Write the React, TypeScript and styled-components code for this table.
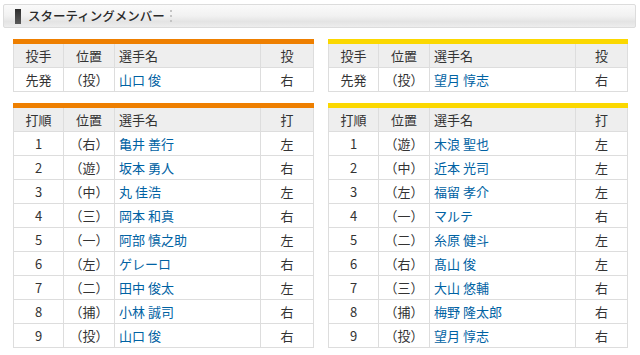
import { createGlobalStyle, styled } from "styled-components"

const GlobalStyle = createGlobalStyle`
  html, body {
    margin: 0;
    padding: 0;
    background: #ffffff;
  }
  body {
    font-family: "Noto Sans CJK JP", "Noto Sans", sans-serif;
    color: #333333;
  }
`

const Page = styled.div`
  width: 640px;
  padding: 4px 0 0 3px;
  box-sizing: border-box;
`

const TitleBar = styled.div`
  width: 633px;
  height: 24px;
  box-sizing: border-box;
  border: 1px solid #dcdcdc;
  border-radius: 2px;
  background: linear-gradient(#fafafa 0%, #f1f1f1 50%, #e4e4e4 75%, #ededed 100%);
  display: flex;
  align-items: center;
  padding-left: 11px;
`

const TitleMark = styled.span`
  width: 6px;
  height: 15px;
  background: linear-gradient(#2e2e2e, #5a5a5a);
  margin-right: 7px;
`

const TitleText = styled.h2`
  margin: 0;
  font-size: 12.5px;
  font-weight: 500;
  color: #2a2a2a;
  line-height: 1;
`

const Dots = styled.span`
  display: flex;
  flex-direction: column;
  gap: 3px;
  margin-left: 5px;

  i {
    width: 2px;
    height: 2px;
    background: #c4c4c4;
  }
`

const Columns = styled.div`
  display: flex;
  gap: 14px;
  padding: 11px 0 0 10px;
`

const Side = styled.div`
  display: flex;
  flex-direction: column;
  gap: 11px;
`

const Table = styled.table<{ $accent: string; $w: number }>`
  border-collapse: collapse;
  table-layout: fixed;
  width: ${(p) => p.$w}px;
  border-top: 5px solid ${(p) => p.$accent};
  font-size: 13px;
  line-height: 1;

  th, td {
    border: 1px solid #dddddd;
    height: 23px;
    padding: 0;
    text-align: center;
    font-weight: normal;
    color: #333333;
    white-space: nowrap;
  }

  tr:first-child th {
    border-top: 0;
  }

  th {
    background: #eeeeee;
  }

  .name {
    text-align: left;
    padding-left: 4px;
  }

  td.name {
    color: #0062a3;
  }
`

type Player = [string, string, string, string]

const awayPitcher: Player = ["先発", "（投）", "山口 俊", "右"]
const homePitcher: Player = ["先発", "（投）", "望月 惇志", "右"]

const awayOrder: Player[] = [
  ["1", "（右）", "亀井 善行", "左"],
  ["2", "（遊）", "坂本 勇人", "右"],
  ["3", "（中）", "丸 佳浩", "左"],
  ["4", "（三）", "岡本 和真", "右"],
  ["5", "（一）", "阿部 慎之助", "左"],
  ["6", "（左）", "ゲレーロ", "右"],
  ["7", "（二）", "田中 俊太", "左"],
  ["8", "（捕）", "小林 誠司", "右"],
  ["9", "（投）", "山口 俊", "右"],
]

const homeOrder: Player[] = [
  ["1", "（遊）", "木浪 聖也", "左"],
  ["2", "（中）", "近本 光司", "左"],
  ["3", "（左）", "福留 孝介", "左"],
  ["4", "（一）", "マルテ", "右"],
  ["5", "（二）", "糸原 健斗", "左"],
  ["6", "（右）", "髙山 俊", "左"],
  ["7", "（三）", "大山 悠輔", "右"],
  ["8", "（捕）", "梅野 隆太郎", "右"],
  ["9", "（投）", "望月 惇志", "右"],
]

function Lineup({ accent, w, last, head, rows }: { accent: string; w: number; last: number; head: Player; rows: Player[] }) {
  return (
    <Table $accent={accent} $w={w}>
      <colgroup>
        <col style={{ width: 50 }} />
        <col style={{ width: 51 }} />
        <col style={{ width: 146 }} />
        <col style={{ width: last }} />
      </colgroup>
      <thead>
        <tr>
          <th>{head[0]}</th>
          <th>{head[1]}</th>
          <th className="name">{head[2]}</th>
          <th>{head[3]}</th>
        </tr>
      </thead>
      <tbody>
        {rows.map((r, i) => (
          <tr key={i}>
            <td>{r[0]}</td>
            <td>{r[1]}</td>
            <td className="name">{r[2]}</td>
            <td>{r[3]}</td>
          </tr>
        ))}
      </tbody>
    </Table>
  )
}

function App() {
  const pHead: Player = ["投手", "位置", "選手名", "投"]
  const bHead: Player = ["打順", "位置", "選手名", "打"]
  return (
    <Page>
      <GlobalStyle />
      <TitleBar>
        <TitleMark />
        <TitleText>スターティングメンバー</TitleText>
        <Dots><i /><i /><i /></Dots>
      </TitleBar>
      <Columns>
        <Side>
          <Lineup accent="#ee7f00" w={300} last={53} head={pHead} rows={[awayPitcher]} />
          <Lineup accent="#ee7f00" w={300} last={53} head={bHead} rows={awayOrder} />
        </Side>
        <Side>
          <Lineup accent="#fbd800" w={299} last={52} head={pHead} rows={[homePitcher]} />
          <Lineup accent="#fbd800" w={299} last={52} head={bHead} rows={homeOrder} />
        </Side>
      </Columns>
    </Page>
  )
}

export default App
